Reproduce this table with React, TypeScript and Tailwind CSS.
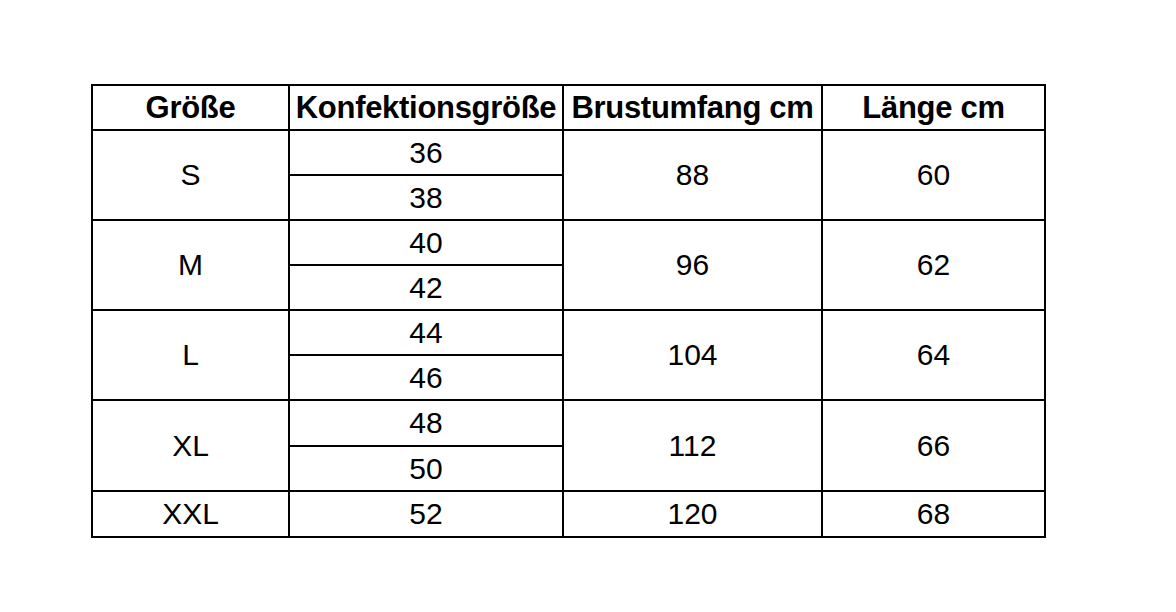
import React from "react";

const groups = [
  { size: "S", konf: ["36", "38"], brust: "88", laenge: "60", h: ["h-[45px]", "h-[45px]"] },
  { size: "M", konf: ["40", "42"], brust: "96", laenge: "62", h: ["h-[45px]", "h-[45px]"] },
  { size: "L", konf: ["44", "46"], brust: "104", laenge: "64", h: ["h-[45px]", "h-[45px]"] },
  { size: "XL", konf: ["48", "50"], brust: "112", laenge: "66", h: ["h-[46px]", "h-[45px]"] },
];

export default function App() {
  const cell = "border-2 border-black text-center align-middle p-0";
  return (
    <div
      className="w-[1176px] h-[612px] bg-white pt-[84px] pl-[91px]"
      style={{ fontFamily: '"Liberation Sans", Arial, sans-serif' }}
    >
      <table className="border-collapse text-black table-fixed">
        <colgroup>
          <col className="w-[197px]" />
          <col className="w-[274px]" />
          <col className="w-[259px]" />
          <col className="w-[223px]" />
        </colgroup>
        <thead>
          <tr className="h-[45px]">
            {["Größe", "Konfektionsgröße", "Brustumfang cm", "Länge cm"].map((h) => (
              <th
                key={h}
                className={`${cell} text-[31px] font-bold leading-none tracking-[-0.3px] whitespace-nowrap`}
              >
                {h}
              </th>
            ))}
          </tr>
        </thead>
        <tbody className="text-[30px] leading-none">
          {groups.map((g) => (
            <React.Fragment key={g.size}>
              <tr className={g.h[0]}>
                <td rowSpan={2} className={cell}>
                  {g.size}
                </td>
                <td className={cell}>{g.konf[0]}</td>
                <td rowSpan={2} className={cell}>
                  {g.brust}
                </td>
                <td rowSpan={2} className={cell}>
                  {g.laenge}
                </td>
              </tr>
              <tr className={g.h[1]}>
                <td className={cell}>{g.konf[1]}</td>
              </tr>
            </React.Fragment>
          ))}
          <tr className="h-[46px]">
            <td className={cell}>XXL</td>
            <td className={cell}>52</td>
            <td className={cell}>120</td>
            <td className={cell}>68</td>
          </tr>
        </tbody>
      </table>
    </div>
  );
}
